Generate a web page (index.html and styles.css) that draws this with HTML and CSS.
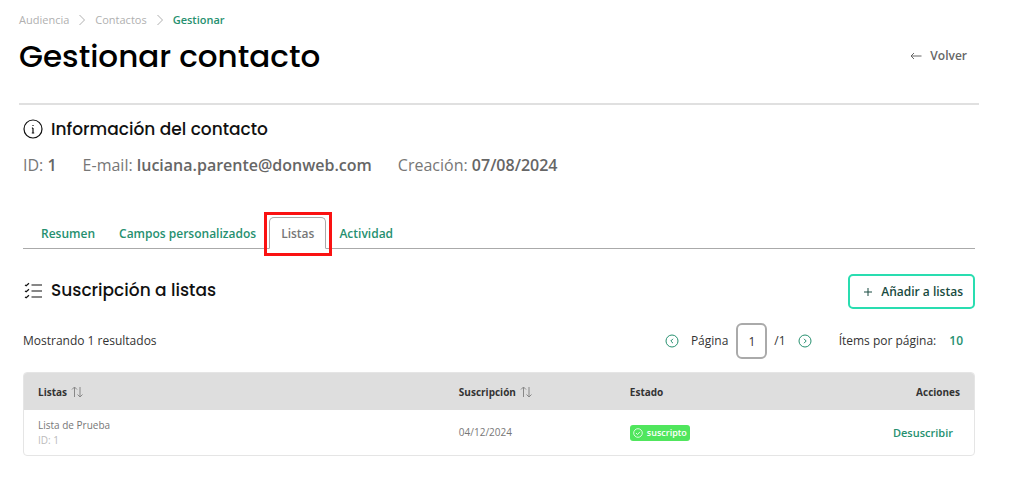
FILE: index.html
```html
<!DOCTYPE html>
<html lang="es">
<head>
<meta charset="utf-8">
<meta name="viewport" content="width=device-width, initial-scale=1">
<title>Gestionar contacto</title>
<link rel="stylesheet" href="styles.css">
</head>
<body>
<div class="page">
  <header class="page-header">
    <nav class="breadcrumb" aria-label="Ruta">
      <a href="#">Audiencia</a>
      <svg class="separator" viewBox="0 0 8 12"><path d="M1.500 1l5 5-5 5"/></svg>
      <a href="#">Contactos</a>
      <svg class="separator" viewBox="0 0 8 12"><path d="M1.500 1l5 5-5 5"/></svg>
      <a href="#" class="current" aria-current="page">Gestionar</a>
    </nav>
    <div class="title-row">
      <h1>Gestionar contacto</h1>
      <a class="back" href="#"><svg class="icon-back" viewBox="0 0 12 10"><path d="M11.500 5H1M4 2L1 5l3 3"/></svg>Volver</a>
    </div>
  </header>
  <main class="content">
    <section class="info">
      <h2><svg class="icon-heading" viewBox="0 0 20 20"><circle cx="10" cy="10" r="9"/><path d="M10 9v5M8.900 9.200H10M8.800 14h2.400M10 6v1"/></svg>Información del contacto</h2>
      <div class="details">
        <span>ID: <b>1</b></span>
        <span>E-mail: <b>luciana.parente@donweb.com</b></span>
        <span>Creación: <b>07/08/2024</b></span>
      </div>
    </section>
    <nav class="tabs" aria-label="Secciones">
      <a href="#">Resumen</a>
      <a href="#">Campos personalizados</a>
      <a href="#" class="active" aria-current="true">Listas</a>
      <a href="#">Actividad</a>
    </nav>
    <section>
      <div class="section-head">
        <h2><svg class="icon-heading" viewBox="0 0 20 20"><path d="M8.500 5H19M8.500 11H19M8.500 17H19M2 5l1.200.8L6 3.200M2 11l1.200.8L6 9.200M2 17l1.200.8L6 15.200"/></svg>Suscripción a listas</h2>
        <button class="add" type="button"><svg class="icon-plus" viewBox="0 0 10 10"><path d="M5 1v8M1 5h8"/></svg>Añadir a listas</button>
      </div>
      <div class="toolbar">
        <span>Mostrando 1 resultados</span>
        <div class="pager">
          <button class="step" type="button" aria-label="Anterior"><svg viewBox="0 0 14 14"><circle cx="7" cy="7" r="6"/><path d="M8 4.800L5.800 7 8 9.200"/></svg></button>
          <label for="page">Página</label>
          <input id="page" type="text" value="1">
          <span class="total">/1</span>
          <button class="step" type="button" aria-label="Siguiente"><svg viewBox="0 0 14 14"><circle cx="7" cy="7" r="6"/><path d="M6 4.800L8.200 7 6 9.200"/></svg></button>
          <span class="per-page">Ítems por página:</span>
          <button class="count" type="button">10</button>
        </div>
      </div>
      <div class="table-box">
        <table>
          <thead>
            <tr>
              <th class="col-list">Listas <svg class="icon-sort" viewBox="0 0 12 12"><path d="M3.500 11V1M1 3.500L3.500 1 6 3.500M9 1v10M6.500 8.500L9 11l2.500-2.500"/></svg></th>
              <th class="col-date">Suscripción <svg class="icon-sort" viewBox="0 0 12 12"><path d="M3.500 11V1M1 3.500L3.500 1 6 3.500M9 1v10M6.500 8.500L9 11l2.500-2.500"/></svg></th>
              <th>Estado</th>
              <th class="actions">Acciones</th>
            </tr>
          </thead>
          <tbody>
            <tr>
              <td>Lista de Prueba<span class="list-id">ID: 1</span></td>
              <td>04/12/2024</td>
              <td><span class="badge"><svg viewBox="0 0 10 10"><circle cx="5" cy="5" r="4.300"/><path d="M3 5l1.500 1.500L7 3.800"/></svg>suscripto</span></td>
              <td class="actions"><button class="unsubscribe" type="button">Desuscribir</button></td>
            </tr>
          </tbody>
        </table>
      </div>
    </section>
  </main>
</div>
</body>
</html>
```
FILE: styles.css
```css
* { box-sizing: border-box; }
body {
  margin: 0;
  background: #fff;
  color: #333;
  font: 12px/16px "Open Sans", "Noto Sans", sans-serif;
}
a { text-decoration: none; color: inherit; }
button { margin: 0; padding: 0; border: 0; background: none; font: inherit; cursor: pointer; }
svg { fill: none; stroke: currentColor; stroke-width: 1; flex: none; }
h1, h2 { margin: 0; font-family: Poppins, Inter, sans-serif; font-weight: 500; }
.page { padding: 12px 49px 24px 19px; }
.page-header { border-bottom: 2px solid #e0e0e0; }
.breadcrumb {
  display: flex;
  align-items: center;
  gap: 9px;
  color: #b0b0b0;
  font-size: 11px;
  font-weight: 500;
}
.separator { width: 8px; height: 12px; }
.breadcrumb .current { color: #26906f; font-weight: 600; }
.title-row { display: flex; align-items: center; justify-content: space-between; padding: 5px 12px 24px 0; }
h1 { color: #000; font-size: 31px; line-height: 46px; }
.back { display: flex; align-items: center; gap: 8px; color: #666; font-size: 12px; font-weight: 600; }
.icon-back { width: 12px; height: 10px; }
.content { padding: 11px 4px 0; }
h2 { display: flex; align-items: center; gap: 8px; color: #111; font-size: 17px; line-height: 26px; }
.icon-heading { width: 20px; height: 20px; stroke-width: 1.2; }
.details { display: flex; gap: 26px; padding-top: 12px; color: #777; font-size: 16px; line-height: 22px; }
.details b { color: #666; font-weight: 600; }
.tabs {
  display: flex;
  gap: 2px;
  height: 32px;
  margin-top: 41px;
  padding-left: 7px;
  border-bottom: 1px solid #aaa;
  color: #26906f;
  font-size: 12px;
  font-weight: 600;
  line-height: 34px;
}
.tabs a { padding: 0 11px; }
.tabs .active {
  position: relative;
  height: 32px;
  border: 1px solid #aaa;
  border-bottom-color: #fff;
  border-radius: 5px 5px 0 0;
  color: #777;
  line-height: 32px;
}
.tabs .active::after { content: ""; position: absolute; inset: -6px -7px -8px -6px; border: 3px solid #fa1212; }
.section-head { display: flex; align-items: center; justify-content: space-between; margin-top: 25px; }
.section-head h2 { padding-bottom: 3px; }
.add {
  display: flex;
  align-items: center;
  gap: 8px;
  height: 35px;
  padding: 0 10px 0 13px;
  border: 2px solid #29ddb0;
  border-radius: 5px;
  color: #184b40;
  font-size: 12px;
  font-weight: 600;
}
.icon-plus { width: 10px; height: 10px; }
.toolbar { display: flex; align-items: center; justify-content: space-between; margin-top: 14px; }
.pager { display: flex; align-items: center; padding-right: 12px; }
.step { width: 14px; height: 14px; color: #26906f; }
.step svg { display: block; width: 14px; height: 14px; }
.pager label { margin: 0 8px 0 12px; }
.pager input {
  width: 31px;
  height: 36px;
  padding: 0;
  border: 2px solid #aaa;
  border-radius: 6px;
  background: #fff;
  color: #333;
  font: inherit;
  text-align: center;
}
.total { margin: 0 12px 0 7px; }
.per-page { margin: 0 13px 0 27px; }
.count { color: #26906f; font-weight: 600; }
.table-box { margin-top: 13px; overflow: hidden; border: 1px solid #e5e5e5; border-radius: 4px; }
table { width: 100%; border-collapse: collapse; table-layout: fixed; }
th, td { padding: 0 14px; text-align: left; }
th { height: 37px; background: #dedede; color: #333; font-size: 10px; font-weight: 700; }
td { height: 45px; color: #777; font-size: 10px; line-height: 15px; }
.col-list { width: 44.300%; }
.col-date { width: 18%; }
.icon-sort { width: 12px; height: 12px; margin-left: 1px; vertical-align: -2px; color: #888; }
.list-id { display: block; color: #bbb; }
.badge {
  display: inline-flex;
  align-items: center;
  gap: 4px;
  height: 16px;
  padding: 0 3px;
  border-radius: 3px;
  background: #50e65d;
  color: #fff;
  font-size: 9px;
  font-weight: 600;
  vertical-align: middle;
}
.badge svg { width: 10px; height: 10px; stroke-width: 0.8; }
.actions { text-align: right; }
.unsubscribe { padding-right: 7px; color: #26906f; font-size: 11px; font-weight: 600; }
```
